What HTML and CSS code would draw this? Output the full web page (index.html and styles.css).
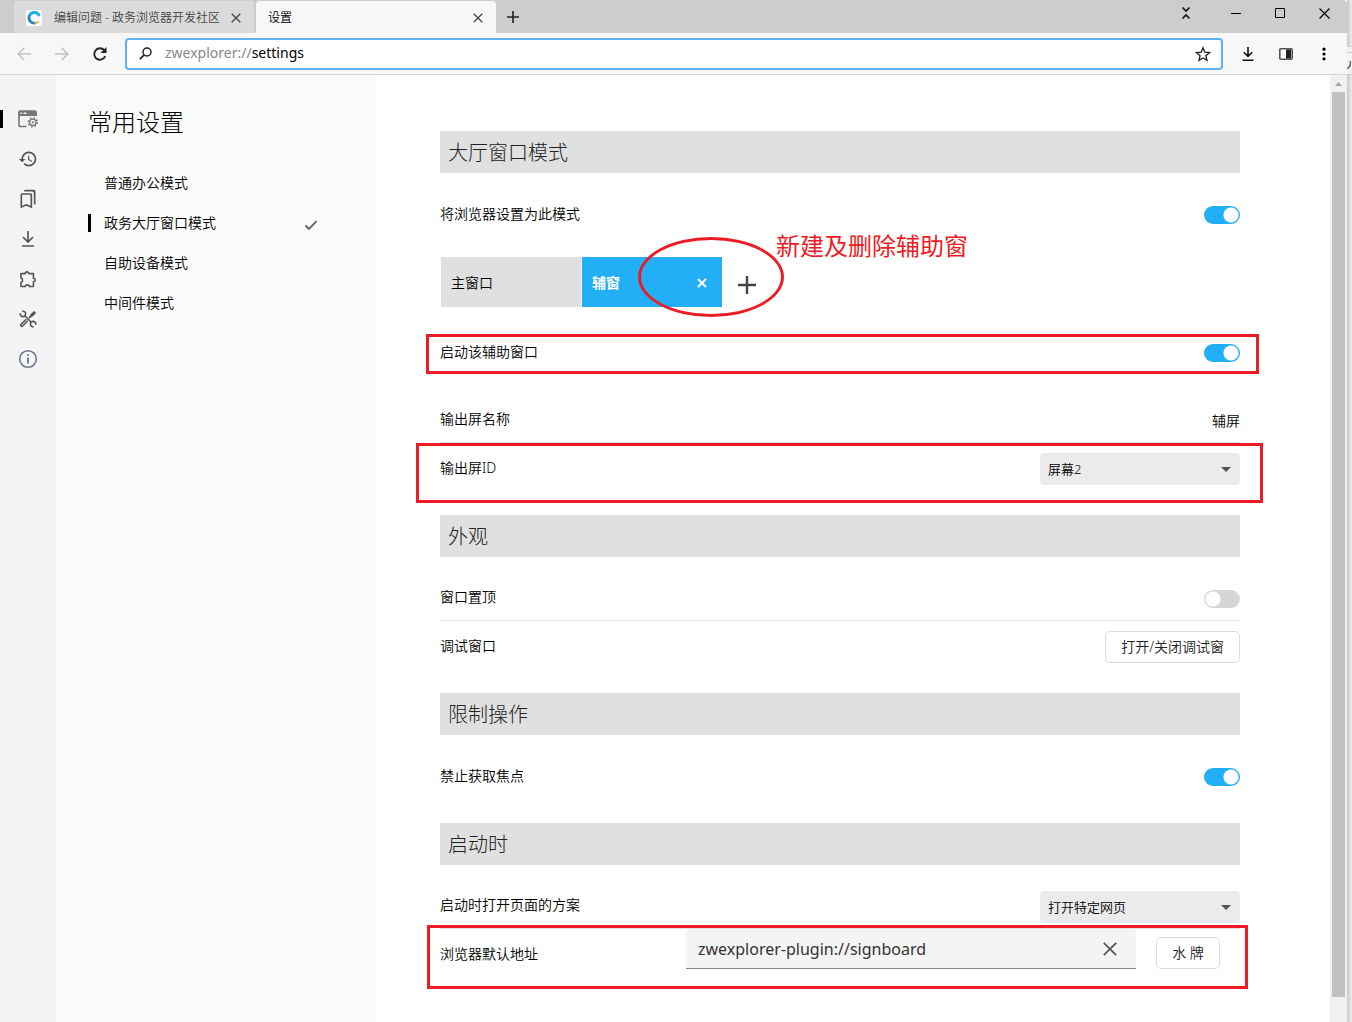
FILE: index.html
```html
<!DOCTYPE html>
<html lang="zh-CN">
<head>
<meta charset="utf-8">
<meta name="viewport" content="width=device-width, initial-scale=1">
<title>设置</title>
<link rel="stylesheet" href="styles.css">
</head>
<body>
<div class="browser">
  <header class="tabstrip">
    <div class="tab">
      <svg class="tab-logo" viewBox="0 0 16 16" aria-hidden="true"><rect width="16" height="16" rx="3" fill="#fff"/><path d="M12.500 4.600A5.300 5.300 0 1 0 9.500 13" fill="none" stroke="#1b86d2" stroke-width="2.800"/><path d="M3.600 5A5.300 5.300 0 0 1 13.400 6.200" fill="none" stroke="#27b3e6" stroke-width="2.600"/><path d="M8.600 14Q12.500 13.700 13.700 10.200Q11.500 12.200 8.600 12.200Z" fill="#f39a2d"/></svg>
      <span class="tab-title">编辑问题 - 政务浏览器开发社区</span>
      <button class="tab-close" aria-label="关闭标签页"><svg width="10" height="10" viewBox="0 0 10 10"><path d="M.7.7l8.600 8.600M9.300.7L.7 9.300" stroke="#444" stroke-width="1.300"/></svg></button>
    </div>
    <div class="tab tab-active">
      <span class="tab-title">设置</span>
      <button class="tab-close" aria-label="关闭标签页"><svg width="10" height="10" viewBox="0 0 10 10"><path d="M.7.7l8.600 8.600M9.300.7L.7 9.300" stroke="#444" stroke-width="1.300"/></svg></button>
    </div>
    <button class="new-tab" aria-label="新建标签页"><svg width="12" height="12" viewBox="0 0 12 12"><path d="M6 0v12M0 6h12" stroke="#222" stroke-width="1.600"/></svg></button>
    <div class="window-controls">
      <button class="collapse" aria-label="收起"><svg width="10" height="14" viewBox="0 0 10 14"><path d="M1.500 1.500L5 5l3.500-3.500M1.500 12.500L5 9l3.500 3.500" fill="none" stroke="#111" stroke-width="1.600"/></svg></button>
      <button aria-label="最小化"><svg width="10" height="14" viewBox="0 0 10 14"><path d="M0 7.500h10" stroke="#000"/></svg></button>
      <button aria-label="最大化"><svg width="10" height="10" viewBox="0 0 10 10"><path d="M.5.5h9v9h-9z" fill="none" stroke="#000"/></svg></button>
      <button aria-label="关闭"><svg width="11" height="11" viewBox="0 0 11 11"><path d="M.5.5l10 10M10.500.5l-10 10" stroke="#000" stroke-width="1.200"/></svg></button>
    </div>
  </header>

  <div class="toolbar">
    <div class="tools">
      <button aria-label="后退" disabled><svg width="14" height="14" viewBox="0 0 14 14"><path d="M14 7H1.500M7.200 1L1.200 7l6 6" fill="none" stroke="#c1c1c1" stroke-width="1.600"/></svg></button>
      <button aria-label="前进" disabled><svg width="14" height="14" viewBox="0 0 14 14"><path d="M0 7h12.500M6.800 1l6 6-6 6" fill="none" stroke="#c1c1c1" stroke-width="1.600"/></svg></button>
      <button aria-label="重新加载"><svg width="16" height="16" viewBox="0 0 16 16"><path d="M13.200 10.200A5.700 5.700 0 1 1 12.300 4.300" fill="none" stroke="#222" stroke-width="1.900"/><path d="M14.500 1v6h-6z" fill="#222"/></svg></button>
    </div>
    <div class="omnibox">
      <svg width="13" height="13" viewBox="0 0 13 13" aria-hidden="true"><circle cx="8" cy="5" r="4" fill="none" stroke="#222" stroke-width="1.500"/><path d="M5.200 7.800L.8 12.200" stroke="#222" stroke-width="1.700"/></svg>
      <label class="scheme" for="url">zwexplorer://</label>
      <input id="url" class="url" type="text" value="settings">
      <button class="star" aria-label="收藏"><svg width="16" height="16" viewBox="0 0 16 16"><path d="M8 1.800l1.800 4.400 4.700.4-3.600 3.100 1.100 4.600L8 11.900l-4 2.400 1.100-4.600L1.500 6.600l4.700-.4z" fill="none" stroke="#222" stroke-width="1.300"/></svg></button>
    </div>
    <div class="tools">
      <button aria-label="下载"><svg width="14" height="16" viewBox="0 0 14 16"><path d="M7 1v9M2.800 6.200L7 10.400l4.200-4.200M1.500 14.200h11" fill="none" stroke="#111" stroke-width="1.600"/></svg></button>
      <button aria-label="侧边栏"><svg width="14" height="12" viewBox="0 0 14 12"><rect x=".8" y=".8" width="12.400" height="10.400" rx="1" fill="#fff" stroke="#555" stroke-width="1.600"/><path d="M7 1.500h5v9H7z" fill="#222"/></svg></button>
      <button aria-label="更多"><svg width="4" height="14" viewBox="0 0 4 14"><circle cx="2" cy="2.200" r="1.600"/><circle cx="2" cy="7" r="1.600"/><circle cx="2" cy="11.800" r="1.600"/></svg></button>
    </div>
  </div>

  <div class="page">
    <nav class="rail" aria-label="功能">
      <a class="rail-active" href="#common" aria-label="常用设置"><svg width="20" height="18" viewBox="0 0 20 18"><path d="M8.500 16.500H2.800A1.800 1.800 0 0 1 1 14.700V2.500M18 2.500V6" fill="none" stroke="#777" stroke-width="1.600"/><path d="M.2 6V2A1.800 1.800 0 0 1 2 .2h15A1.800 1.800 0 0 1 18.800 2v4z" fill="#777"/><path d="M2.500 2.500h1.500v1.500H2.500zM5.500 2.500h3v1.500h-3z" fill="#f4f4f4"/><circle cx="14.800" cy="12.300" r="3.200" fill="#f4f4f4" stroke="#777" stroke-width="1.400"/><circle cx="14.800" cy="12.300" r="1.100" fill="#777"/><circle cx="14.800" cy="12.300" r="4.500" fill="none" stroke="#777" stroke-width="1.600" stroke-dasharray="1.500 2.030"/></svg></a>
      <a href="#history" aria-label="历史记录"><svg width="20" height="20" viewBox="0 0 24 24" fill="#555"><path d="M13.500 8H12v5l4.280 2.540.72-1.210-3.500-2.080V8zM13 3a9 9 0 0 0-9 9H1l3.960 4.030L9 12H6a7 7 0 1 1 7 7c-1.930 0-3.680-.79-4.940-2.060l-1.420 1.420A8.960 8.960 0 0 0 13 21a9 9 0 0 0 0-18z"/></svg></a>
      <a href="#bookmarks" aria-label="书签"><svg width="20" height="20" viewBox="0 0 24 24" fill="#555"><path d="M15 7v12.970l-4.210-1.810-.79-.34-.79.34L5 19.970V7h10m4-6H8.990C7.890 1 7 1.900 7 3h10c1.100 0 2 .9 2 2v13l2 1V3c0-1.100-.9-2-2-2zm-4 4H5c-1.100 0-2 .9-2 2v16l7-3 7 3V7c0-1.100-.9-2-2-2z"/></svg></a>
      <a href="#downloads" aria-label="下载内容"><svg width="14" height="18" viewBox="0 0 14 18"><path d="M7 1v11M2 7l5 5 5-5M1 16h12" fill="none" stroke="#555" stroke-width="1.700"/></svg></a>
      <a href="#extensions" aria-label="扩展程序"><svg width="20" height="20" viewBox="0 0 24 24"><path d="M3.500 5.500h5.200a2 2 0 1 1 4.200 0H18.500v5.500a2.200 2.200 0 1 1 0 4.400v5.600h-4.700a2.700 2.700 0 0 0-5.200 0H3.500v-4.900a2.800 2.800 0 0 0 0-5.400z" fill="none" stroke="#555" stroke-width="1.900" stroke-linejoin="round"/></svg></a>
      <a href="#tools" aria-label="工具"><svg width="18" height="18" viewBox="0 0 18 18" fill="none" stroke="#555" stroke-width="1.600"><path d="M6 6l6 6"/><path d="M3.200 1.300A2.700 2.700 0 1 1 1.300 3.200M14.800 16.700A2.700 2.700 0 1 1 16.700 14.800"/><path d="M10 8l5.800-5.800" stroke-width="1.800"/><path d="M12 6l4-4" stroke-width="3"/><path d="M7.200 9.200L2 14.400a1 1 0 0 0 1.600 1.600l5.200-5.200"/></svg></a>
      <a href="#about" aria-label="关于"><svg width="20" height="20" viewBox="0 0 20 20"><circle cx="10" cy="10" r="8.300" fill="none" stroke="#6b7890" stroke-width="1.600"/><path d="M10 8.500v6M10 5.300v1.800" stroke="#6b7890" stroke-width="1.800"/></svg></a>
    </nav>

    <nav class="sidebar" aria-label="常用设置">
      <h1>常用设置</h1>
      <a href="#office">普通办公模式</a>
      <a class="mode-active" href="#hall">政务大厅窗口模式<svg width="16" height="12" viewBox="0 0 16 12" aria-hidden="true"><path d="M2.500 6.500L6 10l7.500-7.800" fill="none" stroke="#666" stroke-width="1.900"/></svg></a>
      <a href="#kiosk">自助设备模式</a>
      <a href="#middleware">中间件模式</a>
    </nav>

    <main class="settings">
      <section>
        <h2>大厅窗口模式</h2>
        <div class="row">
          <label for="mode">将浏览器设置为此模式</label>
          <div class="control"><input id="mode" class="toggle" type="checkbox" checked></div>
        </div>
        <div class="window-tabs">
          <button class="window-tab">主窗口</button>
          <div class="window-tab window-tab-active">
            <span>辅窗</span>
            <button aria-label="删除辅窗"><svg width="10" height="10" viewBox="0 0 10 10"><path d="M1 1l8 8M9 1L1 9" stroke="#fff" stroke-width="1.900"/></svg></button>
          </div>
          <button class="add-window" aria-label="新建辅窗"><svg width="18" height="18" viewBox="0 0 18 18"><path d="M9 0v18M0 9h18" stroke="#444" stroke-width="2.400"/></svg></button>
          <div class="note-ellipse"></div>
          <div class="note-text">新建及删除辅助窗</div>
        </div>
        <div class="row row-spaced">
          <label for="aux">启动该辅助窗口</label>
          <div class="control"><input id="aux" class="toggle" type="checkbox" checked></div>
          <div class="note-box note-aux"></div>
        </div>
        <div class="row row-divided">
          <span>输出屏名称</span>
          <div class="control">辅屏</div>
        </div>
        <div class="row">
          <label for="screen">输出屏ID</label>
          <div class="control select-box">
            <select id="screen"><option>屏幕2</option></select>
            <svg width="10" height="5" viewBox="0 0 10 5" aria-hidden="true"><path d="M0 0h10L5 5z" fill="#555"/></svg>
          </div>
          <div class="note-box note-screen"></div>
        </div>
      </section>

      <section>
        <h2>外观</h2>
        <div class="row row-divided">
          <label for="ontop">窗口置顶</label>
          <div class="control"><input id="ontop" class="toggle" type="checkbox"></div>
        </div>
        <div class="row">
          <span>调试窗口</span>
          <div class="control"><button class="button">打开/关闭调试窗</button></div>
        </div>
      </section>

      <section>
        <h2>限制操作</h2>
        <div class="row">
          <label for="nofocus">禁止获取焦点</label>
          <div class="control"><input id="nofocus" class="toggle" type="checkbox" checked></div>
        </div>
      </section>

      <section>
        <h2>启动时</h2>
        <div class="row row-divided">
          <label for="startup">启动时打开页面的方案</label>
          <div class="control select-box">
            <select id="startup"><option>打开特定网页</option></select>
            <svg width="10" height="5" viewBox="0 0 10 5" aria-hidden="true"><path d="M0 0h10L5 5z" fill="#555"/></svg>
          </div>
        </div>
        <div class="row">
          <label for="address">浏览器默认地址</label>
          <div class="address">
            <div class="address-field">
              <input id="address" type="text" value="zwexplorer-plugin://signboard">
              <button aria-label="清除"><svg width="14" height="14" viewBox="0 0 14 14"><path d="M.8.8l12.400 12.400M13.200.8L.8 13.200" stroke="#555" stroke-width="1.700"/></svg></button>
            </div>
            <button class="button">水 牌</button>
          </div>
          <div class="note-box note-address"></div>
        </div>
      </section>
    </main>

    <div class="scrollbar" aria-hidden="true">
      <svg width="7" height="4" viewBox="0 0 7 4"><path d="M0 4h7L3.500 0z" fill="#a3a3a3"/></svg>
      <div class="thumb"></div>
    </div>
  </div>
</div>
<div class="behind" aria-hidden="true"><svg width="5" height="30" viewBox="0 0 5 30"><rect width="5" height="29" fill="#f2f2f2"/><path d="M0 .5h5M0 6.500h5M0 28.500h5" stroke="#ccc"/><path d="M3 15q1.500 6-3 7.500" fill="none" stroke="#666" stroke-width="1.400"/></svg></div>
</body>
</html>
```
FILE: styles.css
```css
* { box-sizing: border-box; }

body {
  margin: 0;
  min-height: 100vh;
  display: flex;
  background: #e9e9e9;
  color: #000;
  font: 350 14px/20px "Noto Sans", "Noto Sans CJK SC", sans-serif;
}

button, input, select { font: inherit; color: inherit; }
button { padding: 0; border: 0; background: none; }
svg { display: block; flex: none; }
a { color: inherit; text-decoration: none; }

.browser { flex: 1; min-width: 0; display: flex; flex-direction: column; background: #fff; }
.behind { width: 5px; padding-top: 46px; background: linear-gradient(90deg, #c8c8c8, #ececec); }

/* Tab strip */
.tabstrip {
  display: flex;
  align-items: stretch;
  gap: 2px;
  height: 33px;
  padding: 1px 0 0 14px;
  background: #cdcdcd;
  border-radius: 0 4px 0 0;
}
.tab {
  display: flex;
  align-items: center;
  width: 240px;
  padding: 1px 12px 0;
  border-radius: 4px 4px 0 0;
  background: #dbdbdb;
  color: #444;
  font-size: 12px;
}
.tab-active { background: #f7f7f7; color: #000; }
.tab-logo { width: 16px; height: 16px; margin-right: 12px; }
.tab-title { flex: 1; white-space: nowrap; }
.tab-close { padding: 0 1px; }
.new-tab { width: 30px; display: grid; place-items: center; }
.window-controls { display: flex; align-items: center; margin-left: auto; padding: 0 1px 8px 0; }
.window-controls button { width: 44px; height: 20px; display: grid; place-items: center; }
.window-controls .collapse { width: 56px; }

/* Address bar */
.toolbar {
  display: flex;
  align-items: center;
  gap: 6px;
  height: 42px;
  padding: 0 4px 0 5px;
  background: #f7f7f7;
  border-bottom: 1px solid #d5d5d5;
}
.tools { display: flex; }
.tools button { width: 38px; height: 32px; display: grid; place-items: center; }
.omnibox {
  flex: 1;
  display: flex;
  align-items: center;
  height: 32px;
  padding: 0 10px 0 12px;
  border: 2px solid #63b1f5;
  border-radius: 4px;
  background: #fff;
  font-weight: 400;
}
.scheme { margin-left: 13px; color: #888; }
.url { flex: 1; min-width: 0; padding: 0; border: 0; outline: 0; background: none; }
.scheme, .url { padding-bottom: 2px; }

/* Page columns */
.page { flex: 1; display: flex; }

.rail { width: 56px; padding-top: 24px; background: #f4f4f4; }
.rail a { display: grid; place-items: center; height: 40px; }
.rail-active { background: linear-gradient(#000, #000) left center / 3px 18px no-repeat; }

.sidebar { width: 320px; padding: 31px 57px 0 32px; background: #fafafa; }
h1 { margin: 0 0 25px; font-size: 24px; line-height: 32px; font-weight: 300; }
.sidebar a {
  display: flex;
  align-items: center;
  justify-content: space-between;
  height: 40px;
  padding-left: 16px;
}
.sidebar .mode-active { background: linear-gradient(#000, #000) left center / 3px 18px no-repeat; }
.mode-active svg { margin-top: 4px; }

.settings { flex: 1; padding: 56px 90px 20px 64px; }
section { padding-bottom: 22px; }
h2 {
  margin: 0 0 16px;
  padding: 7px 8px 5px;
  background: #e0e0e0;
  color: #222;
  font-size: 20px;
  line-height: 30px;
  font-weight: 300;
}

.row {
  position: relative;
  display: flex;
  align-items: center;
  justify-content: space-between;
  min-height: 50px;
}
.row-divided { min-height: 48px; border-bottom: 1px solid #e0e0e0; }
.row-spaced { margin: 20px 0 18px; }
.control { padding-top: 2px; }
.row-divided .control { padding-top: 4px; }

/* Controls */
.toggle {
  appearance: none;
  display: block;
  width: 36px;
  height: 18px;
  margin: 0;
  border-radius: 9px;
  background: radial-gradient(circle at 9px 9px, #fff 7px, #d6d6d6 8px);
}
.toggle:checked { background: radial-gradient(circle at 27px 9px, #fff 7px, #22aff5 8px); }

.select-box { position: relative; width: 200px; }
.select-box select {
  appearance: none;
  display: block;
  width: 100%;
  height: 32px;
  padding: 0 8px;
  border: 0;
  border-radius: 4px;
  background: #ebebeb;
  font-size: 13px;
}
.select-box svg { position: absolute; right: 9px; bottom: 13px; pointer-events: none; }

.button {
  display: block;
  height: 32px;
  padding: 0 15px;
  border: 1px solid #dadada;
  border-radius: 5px;
  background: #fff;
  color: #222;
}

.address {
  align-self: flex-start;
  display: flex;
  align-items: flex-end;
  gap: 20px;
  padding-right: 20px;
}
.address-field {
  display: flex;
  align-items: center;
  width: 450px;
  height: 40px;
  padding: 0 19px 0 12px;
  border-bottom: 1px solid #888;
  border-radius: 4px 4px 0 0;
  background: #f4f4f4;
  color: #333;
}
.address-field input {
  flex: 1;
  min-width: 0;
  padding: 0;
  border: 0;
  outline: 0;
  background: none;
  font-size: 16px;
  font-weight: 400;
}
.address .button { width: 64px; padding: 0; }

/* Window tabs */
.window-tabs { position: relative; display: flex; gap: 1px; margin-top: 18px; padding-left: 1px; }
.window-tab {
  display: flex;
  align-items: center;
  justify-content: space-between;
  width: 140px;
  height: 50px;
  padding: 2px 15px 0 10px;
  background: #e0e0e0;
}
.window-tab-active { background: #22aff5; color: #fff; font-weight: 700; }
.add-window { width: 48px; display: grid; place-items: center; padding-top: 5px; }

/* Red annotations over the page */
.note-box { position: absolute; border: 3px solid #ed1c24; pointer-events: none; }
.note-aux { inset: 7px -19px 3px -14px; }
.note-screen { inset: 0 -23px -10px -24px; }
.note-address { inset: -4px -8px -10px -13px; }
.note-ellipse {
  position: absolute;
  left: 198px;
  top: -20px;
  width: 146px;
  height: 80px;
  border: 3px solid #ed1c24;
  border-radius: 50%;
  pointer-events: none;
}
.note-text {
  position: absolute;
  left: 336px;
  top: -27px;
  color: #ed1c24;
  font-size: 24px;
  font-weight: 400;
  line-height: 32px;
}

/* Scrollbar */
.scrollbar { display: flex; flex-direction: column; align-items: center; width: 17px; padding: 7px 2px 25px; background: #f1f1f1; }
.thumb { flex: 1; width: 13px; margin-top: 6px; background: #c1c1c1; }
```
